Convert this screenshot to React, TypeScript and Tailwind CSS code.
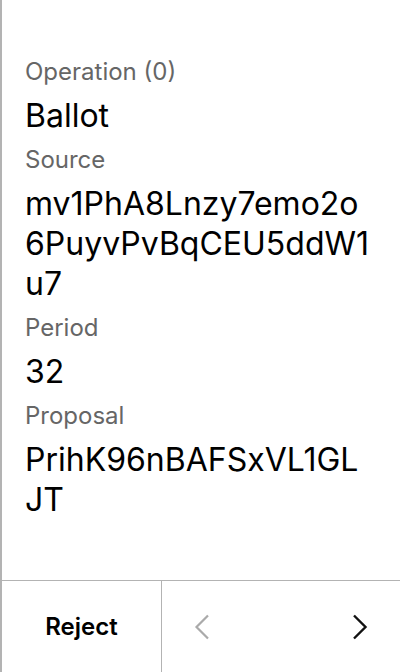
import React from "react";

function Field({ label, value }: { label: string; value: string }) {
  return (
    <div className="flex flex-col gap-[8px]">
      <div className="text-[24px] leading-[32px] text-[#666666]">{label}</div>
      <div className="text-[32px] leading-[40px] text-black break-all">{value}</div>
    </div>
  );
}

export default function App() {
  return (
    <div
      className="w-[400px] h-[672px] bg-white border-l-2 border-[#b3b3b3] flex flex-col"
      style={{ fontFamily: "Inter, 'Noto Sans', sans-serif" }}
    >
      <div className="flex-1 flex flex-col gap-[8px] pl-[23px] pr-[29px] pt-[56px]">
        <Field label="Operation (0)" value="Ballot" />
        <Field label="Source" value="mv1PhA8Lnzy7emo2o6PuyvPvBqCEU5ddW1u7" />
        <Field label="Period" value="32" />
        <Field label="Proposal" value="PrihK96nBAFSxVL1GLJT" />
      </div>
      <div className="h-[92px] border-t border-[#b3b3b3] flex">
        <button className="w-[159px] h-full flex items-center justify-center text-[24px] font-semibold text-black">
          Reject
        </button>
        <div className="flex-1 h-full border-l border-[#b3b3b3] flex justify-between">
          <button className="w-[80px] h-full flex items-center justify-center">
            <svg width="16" height="26" viewBox="0 0 16 26" fill="none">
              <path d="M14 1.5 L2.5 13 L14 24.5" stroke="#aaaaaa" strokeWidth="2.2" />
            </svg>
          </button>
          <button className="w-[80px] h-full flex items-center justify-center">
            <svg width="16" height="26" viewBox="0 0 16 26" fill="none">
              <path d="M2 1.5 L13.5 13 L2 24.5" stroke="#111111" strokeWidth="2.4" />
            </svg>
          </button>
        </div>
      </div>
    </div>
  );
}
